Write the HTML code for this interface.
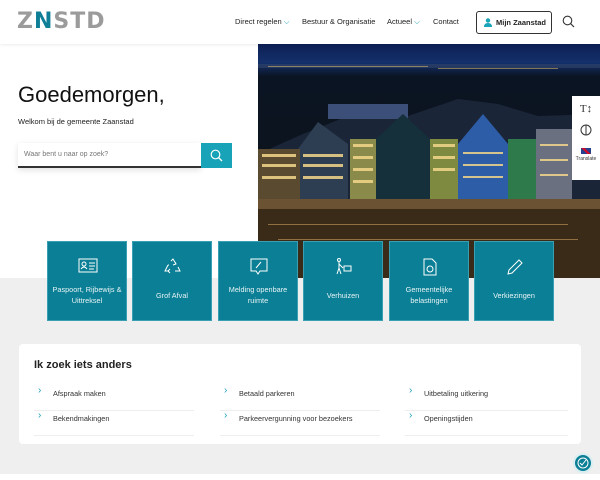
<!DOCTYPE html>
<html><head><meta charset="utf-8"><style>
*{box-sizing:border-box;margin:0;padding:0}
body{width:600px;height:480px;overflow:hidden;font-family:"Liberation Sans",sans-serif;background:#efefef;position:relative;color:#222}
.hdr{position:absolute;left:0;top:0;width:600px;height:44px;background:#fff;box-shadow:0 1px 3px rgba(0,0,0,.08);z-index:5}
.logo{position:absolute;left:17px;top:9px;font-weight:900;font-size:22px;letter-spacing:1px;color:#9b9b9b;font-family:"DejaVu Sans","Liberation Sans",sans-serif}
.logo b{color:#0e7f96}
.nav{position:absolute;top:17px;font-size:7.5px;color:#222}
.chev{color:#1aa0b8}
.btn{position:absolute;left:476px;top:11px;width:76px;height:23px;border:1px solid #333;border-radius:3px;font-size:7.5px;font-weight:bold;line-height:21px;padding-left:19px}
.hero{position:absolute;left:0;top:44px;width:600px;height:234px;background:#fff}
.img{position:absolute;left:258px;top:44px;width:342px;height:234px;overflow:hidden;background:linear-gradient(#0d1f55 0%,#14306a 8%,#0b1422 14%,#0c1420 40%,#0e1118 60%,#2a1d12 80%,#3a2510 100%)}
h1{position:absolute;left:18px;top:82px;font-size:22px;font-weight:normal;color:#111}
.sub{position:absolute;left:18px;top:117px;font-size:7.5px}
.search{position:absolute;left:18px;top:143px;width:183px;height:25px;background:#fff;border-bottom:2px solid #333;box-shadow:0 2px 6px rgba(0,0,0,.12);font-size:7px;color:#777;padding:8px 6px}
.sbtn{position:absolute;left:201px;top:143px;width:31px;height:25px;background:#18a3b8}
.tools{position:absolute;left:572px;top:96px;width:28px;height:84px;background:#fff;z-index:3;text-align:center}
.tile{position:absolute;top:241px;width:80px;height:80px;background:#0b7f95;color:#e8f4f6;font-size:7.3px;text-align:center;line-height:11px;border:1px solid #3a9fb3}
.tile svg{position:absolute;left:30px;top:16px}
.tile span{position:absolute;left:2px;right:2px}
.card{position:absolute;left:19px;top:344px;width:562px;height:100px;background:#fff;border-radius:4px}
.card h2{position:absolute;left:15px;top:15px;font-size:11px;font-weight:bold}
.lk{position:absolute;font-size:7.3px;color:#333;width:160px;border-bottom:1px solid #eee;height:26px;padding:4px 0 0 19px}
.lk:before{content:"›";position:absolute;left:4px;top:0px;color:#1aa0b8;font-size:10px}
.bot{position:absolute;left:0;top:474px;width:600px;height:6px;background:#fff}
</style></head><body>
<div class="hdr">
<div class="logo">Z<b>N</b>STD</div>
<div class="nav" style="left:235px">Direct regelen <span class="chev">⌵</span></div>
<div class="nav" style="left:302px">Bestuur &amp; Organisatie</div>
<div class="nav" style="left:387px">Actueel <span class="chev">⌵</span></div>
<div class="nav" style="left:433px">Contact</div>
<div class="btn"><svg style="position:absolute;left:7px;top:6px" width="8" height="9"><circle cx="4" cy="2.5" r="2.2" fill="#18a3b8"/><path d="M0 9 Q0 5 4 5 Q8 5 8 9Z" fill="#18a3b8"/></svg>Mijn Zaanstad</div>
<svg style="position:absolute;left:562px;top:15px" width="13" height="13"><circle cx="5.5" cy="5.5" r="4.3" fill="none" stroke="#333" stroke-width="1.1"/><path d="M8.5 8.5L12 12" stroke="#333" stroke-width="1.2"/></svg>
</div>
<div class="hero"></div>
<div class="img">
<svg width="342" height="234">
<rect x="0" y="20" width="342" height="4" fill="#3a4a70" opacity=".5"/>
<g fill="#f2c96a" opacity=".5"><rect x="10" y="22" width="160" height="1"/><rect x="180" y="24" width="120" height="1"/></g>
<polygon points="0,110 45,90 95,70 130,60 150,72 200,55 240,60 280,72 342,70 342,160 0,160" fill="#1a2538"/>
<rect x="70" y="60" width="80" height="15" fill="#3b4f78"/>
<polygon points="40,160 40,105 60,78 90,100 90,160" fill="#2d3e52"/>
<polygon points="118,160 118,95 145,70 172,95 172,160" fill="#15303a"/>
<polygon points="200,160 200,100 225,70 250,100 250,160" fill="#2e5da8"/>
<rect x="0" y="105" width="42" height="50" fill="#5a4a30"/>
<rect x="92" y="95" width="26" height="60" fill="#8a8a4a"/>
<rect x="172" y="95" width="28" height="60" fill="#7d8a40"/>
<rect x="250" y="95" width="28" height="60" fill="#2f7a4a"/>
<rect x="278" y="85" width="36" height="70" fill="#6a7080"/>
<g fill="#f3d78a" opacity=".85">
<rect x="4" y="110" width="34" height="3"/><rect x="4" y="120" width="34" height="3"/><rect x="4" y="132" width="34" height="3"/>
<rect x="45" y="110" width="40" height="3"/><rect x="45" y="120" width="40" height="3"/><rect x="45" y="132" width="40" height="3"/>
<rect x="95" y="100" width="20" height="3"/><rect x="95" y="112" width="20" height="3"/><rect x="95" y="124" width="20" height="3"/><rect x="95" y="136" width="20" height="3"/>
<rect x="175" y="100" width="22" height="3"/><rect x="175" y="112" width="22" height="3"/><rect x="175" y="124" width="22" height="3"/>
<rect x="205" y="108" width="40" height="2"/><rect x="205" y="120" width="40" height="2"/><rect x="205" y="132" width="40" height="2"/>
<rect x="282" y="100" width="28" height="2"/><rect x="282" y="115" width="28" height="2"/><rect x="282" y="130" width="28" height="2"/>
</g>
<rect x="0" y="155" width="342" height="10" fill="#6a5232"/>
<rect x="0" y="165" width="342" height="70" fill="#3a2a18"/>
<g fill="#e6b36a" opacity=".5"><rect x="10" y="180" width="300" height="1"/><rect x="20" y="195" width="300" height="1"/></g>
</svg></div>
<h1>Goedemorgen,</h1>
<div class="sub">Welkom bij de gemeente Zaanstad</div>
<div class="search">Waar bent u naar op zoek?</div>
<div class="sbtn"><svg style="position:absolute;left:9px;top:6px" width="13" height="13"><circle cx="5.5" cy="5.5" r="4.3" fill="none" stroke="#fff" stroke-width="1.2"/><path d="M8.5 8.5L12 12" stroke="#fff" stroke-width="1.3"/></svg></div>
<div class="tools">
<div style="font-size:11px;margin-top:7px;color:#333;font-family:'Liberation Serif',serif">T↕</div>
<svg style="margin-top:9px" width="12" height="12"><circle cx="6" cy="6" r="5" fill="none" stroke="#333"/><path d="M6 1V11" stroke="#333"/></svg>
<div style="margin:7px auto 0;width:10px;height:6px;background:linear-gradient(45deg,#24408e 40%,#c8102e 40%,#c8102e 60%,#24408e 60%)"></div>
<div style="font-size:5px;margin-top:2px;color:#333">Translate</div>
</div>
<div class="tile" style="left:47px"><svg width="20" height="16"><rect x="1" y="1" width="18" height="13" fill="none" stroke="#fff"/><circle cx="6" cy="6" r="2" fill="none" stroke="#fff"/><path d="M3 11Q6 7 9 11M11 5H17M11 8H17M11 11H16" stroke="#fff" fill="none"/></svg><span style="top:42px">Paspoort, Rijbewijs &amp; Uittreksel</span></div>
<div class="tile" style="left:132px"><svg width="20" height="18"><path d="M8 3L10 1L13 6M15 9L17 13H12M6 13H2L5 7M7 15L5 13L7 11M12 4L13 6L10 7M6 7L5 7" stroke="#fff" fill="none"/></svg><span style="top:48px">Grof Afval</span></div>
<div class="tile" style="left:218px"><svg width="20" height="18"><path d="M2 1H18V13H11L9 16L7 13H2Z" stroke="#fff" fill="none"/><path d="M7 10L12 4" stroke="#fff"/></svg><span style="top:42px">Melding openbare ruimte</span></div>
<div class="tile" style="left:303px"><svg width="20" height="18"><circle cx="5" cy="2" r="1.5" fill="none" stroke="#fff"/><path d="M5 4V10L3 16M5 10L7 16M5 6L9 10M10 8H17V13H10Z" stroke="#fff" fill="none"/></svg><span style="top:48px">Verhuizen</span></div>
<div class="tile" style="left:389px"><svg width="20" height="18"><path d="M4 1H12L16 5V17H4Z" stroke="#fff" fill="none"/><circle cx="10" cy="11" r="3" fill="none" stroke="#fff"/></svg><span style="top:42px">Gemeentelijke belastingen</span></div>
<div class="tile" style="left:474px"><svg width="20" height="18"><path d="M3 16L4 12L14 2L17 5L7 15Z" stroke="#fff" fill="none"/></svg><span style="top:48px">Verkiezingen</span></div>
<div class="card"><h2>Ik zoek iets anders</h2>
<div class="lk" style="left:15px;top:41px">Afspraak maken</div>
<div class="lk" style="left:201px;top:41px">Betaald parkeren</div>
<div class="lk" style="left:386px;top:41px;width:163px">Uitbetaling uitkering</div>
<div class="lk" style="left:15px;top:66px">Bekendmakingen</div>
<div class="lk" style="left:201px;top:66px">Parkeervergunning voor bezoekers</div>
<div class="lk" style="left:386px;top:66px;width:163px">Openingstijden</div>
</div>
<div class="bot"></div>
<div style="position:absolute;left:573px;top:453px;width:20px;height:20px;border-radius:50%;background:#0b7f95;border:2px solid #d8eef2"><svg width="16" height="16"><circle cx="8" cy="8" r="5" fill="none" stroke="#fff"/><path d="M5 8L7 10L11 5" stroke="#fff" fill="none"/></svg></div>
</body></html>
